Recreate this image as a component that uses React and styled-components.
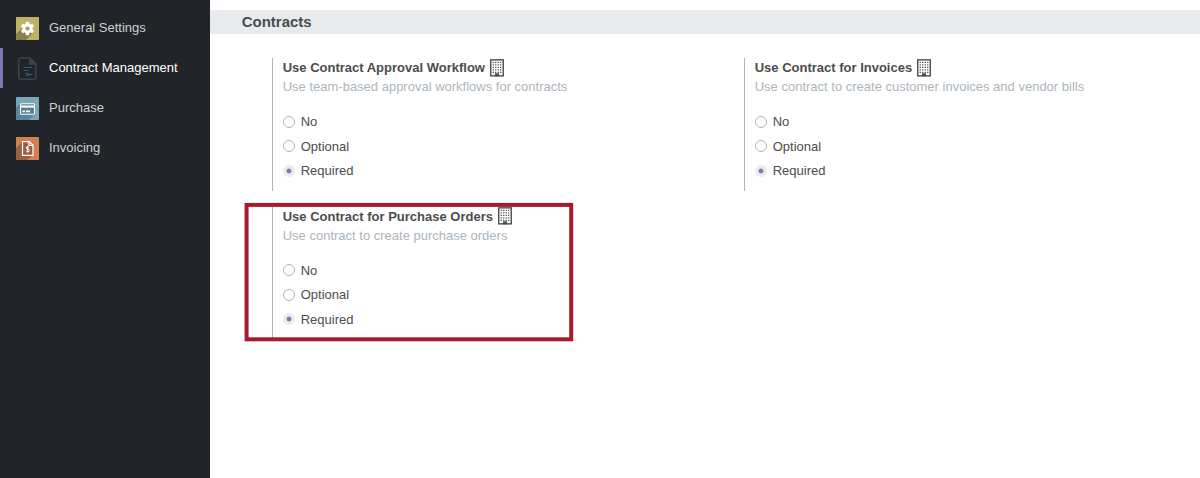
import React from "react";
import styled, { createGlobalStyle, css } from "styled-components";

const GlobalStyle = createGlobalStyle`
  *, *::before, *::after { box-sizing: border-box; }
  body {
    margin: 0;
    background: #fff;
    color: #4c4c4c;
    font: 13px/19.5px "Liberation Sans", Arial, sans-serif;
  }
`;

const Page = styled.div`
  display: flex;
  height: 478px;
  overflow: hidden;
`;

const Sidebar = styled.nav`
  flex: none;
  width: 210px;
  padding-top: 8px;
  background: #212529;
`;

const Tab = styled.a`
  display: flex;
  align-items: center;
  gap: 10px;
  height: 40px;
  padding-left: 16px;
  color: #ced0d3;
  ${(p) =>
    p.$active &&
    css`
      color: #fff;
      box-shadow: inset 3px 0 0 #7c7bad;
    `}
`;

const TabIcon = styled.svg`
  flex: none;
  width: 23px;
  height: 23px;
  margin-top: 1px;
`;

const Main = styled.main`
  flex: 1;
  padding-top: 10px;
`;

const SectionTitle = styled.h2`
  margin: 0;
  height: 24px;
  padding-left: 31.7px;
  background: #e8ebee;
  font-size: 15px;
  line-height: 24px;
  font-weight: bold;
`;

const Settings = styled.div`
  display: grid;
  grid-template-columns: 472px 1fr;
  row-gap: 16px;
  padding: 24px 0 0 62px;
`;

const Setting = styled.section`
  position: relative;
  height: 133px;
  padding-left: 9.7px;
  border-left: 1px solid #b4b4b4;
`;

const Highlight = styled.svg`
  position: absolute;
  left: -29px;
  top: -5px;
  width: 331px;
  height: 141px;
`;

const SettingName = styled.div`
  display: flex;
  align-items: center;
  gap: 5px;
  height: 19px;
  font-weight: bold;
  white-space: nowrap;
`;

const BuildingSvg = styled.svg`
  width: 14px;
  height: 18px;
  margin-top: ${(p) => (p.$raised ? "-1px" : "0")};
`;

const Description = styled.div`
  height: 19px;
  line-height: 19px;
  color: #adb5bd;
`;

const Options = styled.div`
  padding-top: ${(p) => (p.$raised ? "13.3px" : "13.6px")};
`;

const Option = styled.label`
  display: flex;
  align-items: center;
  gap: 6px;
  height: 24.5px;
`;

const Radio = styled.span`
  width: 12px;
  height: 12px;
  margin-top: -0.2px;
  border: 1px solid ${(p) => (p.$checked ? "#e9ecef" : "#adb5bd")};
  border-radius: 50%;
  background: ${(p) =>
    p.$checked ? "radial-gradient(circle, #7c7bad 2px, #e9ecef 2.8px)" : "#fff"};
`;

function GearIcon() {
  return (
    <TabIcon viewBox="0 0 23 23">
      <rect width="23" height="23" rx="0.7" fill="#bfb267" />
      <path d="M6 11 0 17v5.3q0 .7.7.7H10l7.5-7.5z" fill="#8b8150" />
      <g fill="#fff">
        {[0, 60, 120].map((a) => (
          <rect key={a} x="9.7" y="4.8" width="3.6" height="13.4" rx="0.8" transform={`rotate(${a} 11.5 11.5)`} />
        ))}
        <circle cx="11.5" cy="11.5" r="5" />
      </g>
      <circle cx="11.5" cy="11.5" r="2.1" fill="#a49960" />
    </TabIcon>
  );
}

function ContractIcon() {
  return (
    <TabIcon viewBox="0 0 23 23">
      <path
        d="M4.2.9h9.6l6 6v13.3q0 2-2 2H4.7q-2 0-2-2V2.7Q2.7.9 4.2.9z"
        fill="none"
        stroke="#3b444d"
        strokeWidth="1.5"
      />
      <path d="M13.5 1v6.3H20z" fill="#3b444d" stroke="#3b444d" />
      <path d="M7.5 10.5h8.7M7.5 13.5h4.8" stroke="#2b5f87" strokeWidth="1.1" />
      <path d="M10 16l2 1.2-1.2 1.6M11.5 17.5h4.2" fill="none" stroke="#2b6796" strokeWidth="1.2" />
    </TabIcon>
  );
}

function CardIcon() {
  return (
    <TabIcon viewBox="0 0 23 23">
      <rect width="23" height="23" rx="0.7" fill="#7aa5bd" />
      <path d="M4 6.5 0 10.5v11.8q0 .7.7.7H13l6-6z" fill="#5d859b" />
      <rect x="4.5" y="6.7" width="14" height="10.6" rx="0.8" fill="#587d91" stroke="#fff" strokeWidth="1.1" />
      <path d="M4.5 9.5h14" stroke="#fff" strokeWidth="2.2" />
      <path d="M4.8 8.1h13.4" stroke="#86a4b3" strokeWidth="0.5" />
      <path d="M6.5 14.3h2.5M10 14.3h4" stroke="#fff" strokeWidth="1.7" />
    </TabIcon>
  );
}

function InvoiceIcon() {
  return (
    <TabIcon viewBox="0 0 23 23">
      <rect width="23" height="23" rx="0.7" fill="#d08053" />
      <path d="M6 5 0 11v11.3q0 .7.7.7H11l6-5V8z" fill="#9a6041" />
      <path d="M6.5 4.5h6.8l3.7 3.7v10.1H6.5z" fill="none" stroke="#fff" strokeWidth="1.2" />
      <path d="M13 4.5v3.8H17" fill="none" stroke="#fff" strokeWidth="1.2" />
      <path
        d="M13.3 10.6q-.5-.7-1.6-.7-1.5 0-1.5 1.1 0 .9 1.5 1.1 1.7.2 1.7 1.3 0 1.2-1.7 1.2-1.2 0-1.8-.8M11.7 8.8v7"
        fill="none"
        stroke="#fff"
        strokeWidth="1"
      />
    </TabIcon>
  );
}

function BuildingIcon({ raised }) {
  const windows = [];
  [2.7, 5.2, 7.7, 10.2, 12.7].forEach((y) =>
    [2.6, 5.1, 7.6, 10.1].forEach((x) => {
      windows.push([x, y]);
    })
  );
  return (
    <BuildingSvg viewBox="0 0 14 18" fill="#4c4c4c" $raised={raised}>
      <rect x="0.75" y="0.85" width="12.5" height="16" fill="none" stroke="#4c4c4c" strokeWidth="1.4" />
      {windows.map(([x, y]) => (
        <rect key={`${x}-${y}`} x={x} y={y} width="1.3" height="1.3" rx="0.3" />
      ))}
      <rect x="5" y="14.3" width="4" height="3" />
    </BuildingSvg>
  );
}

const TABS = [
  { label: "General Settings", Icon: GearIcon },
  { label: "Contract Management", Icon: ContractIcon, active: true },
  { label: "Purchase", Icon: CardIcon },
  { label: "Invoicing", Icon: InvoiceIcon },
];

const SETTINGS = [
  { name: "Use Contract Approval Workflow", text: "Use team-based approval workflows for contracts" },
  { name: "Use Contract for Invoices", text: "Use contract to create customer invoices and vendor bills" },
  { name: "Use Contract for Purchase Orders", text: "Use contract to create purchase orders", highlighted: true },
];

const CHOICES = ["No", "Optional", "Required"];

export default function App() {
  return (
    <>
      <GlobalStyle />
      <Page>
        <Sidebar>
          {TABS.map(({ label, Icon, active }) => (
            <Tab key={label} $active={active}>
              <Icon />
              {label}
            </Tab>
          ))}
        </Sidebar>
        <Main>
          <SectionTitle>Contracts</SectionTitle>
          <Settings>
            {SETTINGS.map(({ name, text, highlighted }) => (
              <Setting key={name}>
                <SettingName>
                  {name}
                  <BuildingIcon raised={highlighted} />
                </SettingName>
                <Description>{text}</Description>
                <Options $raised={highlighted}>
                  {CHOICES.map((choice) => (
                    <Option key={choice}>
                      <Radio $checked={choice === "Required"} />
                      {choice}
                    </Option>
                  ))}
                </Options>
                {highlighted && (
                  <Highlight viewBox="0 0 331 141">
                    <rect x="2.6" y="2.9" width="324.6" height="134.4" fill="none" stroke="#a9192d" strokeWidth="4" />
                  </Highlight>
                )}
              </Setting>
            ))}
          </Settings>
        </Main>
      </Page>
    </>
  );
}
